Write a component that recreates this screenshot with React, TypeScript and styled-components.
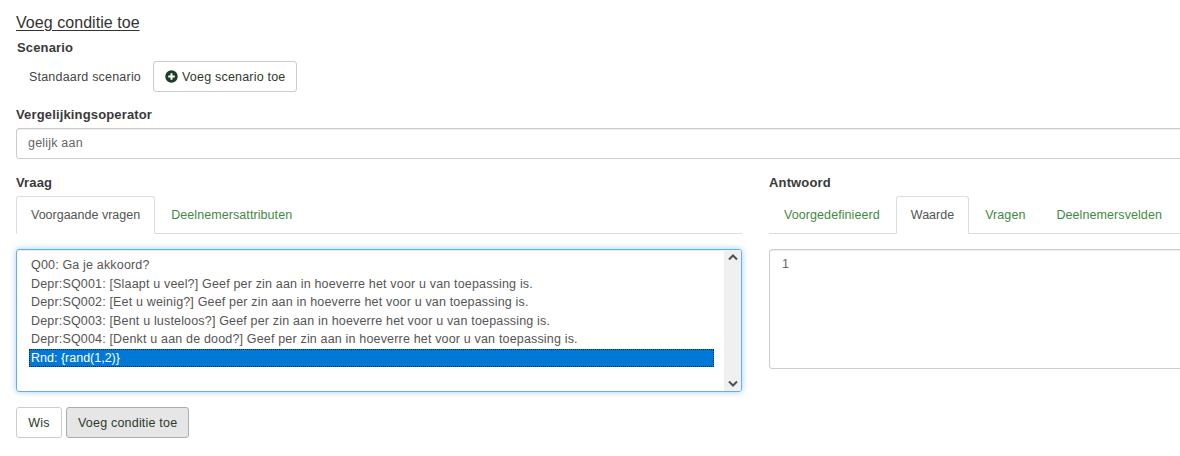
import styled, { createGlobalStyle } from "styled-components";

const GlobalStyle = createGlobalStyle`
  html, body {
    margin: 0;
    width: 1180px;
    height: 456px;
    overflow: hidden;
    background: #fff;
  }
  body {
    font-family: "Liberation Sans", Arial, sans-serif;
    font-size: 12.5px;
    letter-spacing: 0.2px;
    color: #555;
  }
`;

const Page = styled.div`
  width: 1200px;
  padding: 14px 0 0 16px;
  box-sizing: border-box;
`;

const Title = styled.h4`
  margin: 0;
  width: max-content;
  font-size: 16px;
  font-weight: 400;
  letter-spacing: 0.05px;
  line-height: 18px;
  color: #333;
  text-decoration: underline;
  text-underline-offset: 2px;
`;

const Label = styled.label`
  display: block;
  font-size: 13px;
  font-weight: 700;
  letter-spacing: 0.15px;
  line-height: 16px;
  color: #3a3a3a;
`;

const ScenarioLabel = styled(Label)`
  margin: 8px 0 0 1px;
`;

const ScenarioRow = styled.div`
  display: flex;
  align-items: center;
  gap: 12px;
  margin: 5px 0 0 13px;
`;

const ScenarioName = styled.span`
  color: #444;
`;

const Button = styled.button<{ $active?: boolean; $icon?: boolean }>`
  display: inline-flex;
  align-items: center;
  justify-content: center;
  gap: 4px;
  height: 31px;
  padding: ${(props) => (props.$icon ? "0 10px 0 11px" : "0 11px")};
  box-sizing: border-box;
  font: inherit;
  letter-spacing: inherit;
  color: #2b3a2b;
  border: 1px solid ${(props) => (props.$active ? "#adadad" : "#ccc")};
  border-radius: 3px;
  background: ${(props) => (props.$active ? "#e6e6e6" : "#fff")};
`;

const ClearButton = styled(Button)`
  min-width: 46px;
`;

const OperatorLabel = styled(Label)`
  margin-top: 15px;
`;

const Input = styled.div<{ $tall?: boolean }>`
  box-sizing: border-box;
  height: ${(props) => (props.$tall ? "120px" : "31px")};
  margin-top: ${(props) => (props.$tall ? "15px" : "5px")};
  padding: ${(props) => (props.$tall ? "7px 12px" : "7px 11px")};
  line-height: 15px;
  color: #666;
  border: 1px solid #ccc;
  border-radius: 3px;
  box-shadow: inset 0 1px 1px rgba(0, 0, 0, 0.075);
`;

const Columns = styled.div`
  display: grid;
  grid-template-columns: 726px 1fr;
  column-gap: 27px;
  margin-top: 16px;
`;

const Column = styled.section``;

const Tabs = styled.div`
  display: flex;
  height: 38px;
  margin-top: 5px;
  box-sizing: border-box;
  border-bottom: 1px solid #ddd;
`;

const Tab = styled.div<{ $active?: boolean }>`
  height: 38px;
  margin-right: 1px;
  padding: 0 14px;
  box-sizing: border-box;
  line-height: 36px;
  letter-spacing: ${(props) => (props.$active ? "0" : "0.08px")};
  color: ${(props) => (props.$active ? "#555" : "#3f8a43")};
  background: ${(props) => (props.$active ? "#fff" : "transparent")};
  border: 1px solid ${(props) => (props.$active ? "#ddd" : "transparent")};
  border-bottom-color: ${(props) => (props.$active ? "#fff" : "transparent")};
  border-radius: 3px 3px 0 0;
`;

const ListBox = styled.div`
  display: flex;
  height: 143px;
  margin-top: 15px;
  box-sizing: border-box;
  border: 1px solid #66afe9;
  border-radius: 3px;
  box-shadow: inset 0 1px 1px rgba(0, 0, 0, 0.075), 0 0 6px rgba(102, 175, 233, 0.6);
  overflow: hidden;
`;

const Options = styled.ul`
  flex: 1;
  margin: 0;
  padding: 6px 10px 0 12px;
  list-style: none;
`;

const Option = styled.li<{ $selected?: boolean }>`
  height: ${(props) => (props.$selected ? "18px" : "18.6px")};
  padding-left: 2px;
  line-height: 18px;
  letter-spacing: ${(props) => (props.$selected ? "0" : "0.17px")};
  white-space: nowrap;
  box-sizing: border-box;
  color: ${(props) => (props.$selected ? "#fff" : "#555")};
  background: ${(props) => (props.$selected ? "#0078d7" : "transparent")};
  outline: ${(props) => (props.$selected ? "1px dotted #0a2a4a" : "none")};
  outline-offset: -1px;
`;

const Scrollbar = styled.div`
  display: flex;
  flex-direction: column;
  justify-content: space-between;
  align-items: center;
  width: 17px;
  padding: 4px 0;
  box-sizing: border-box;
  background: #f0f0f0;
`;

const Actions = styled.div`
  display: flex;
  gap: 4px;
  margin-top: 15px;
`;

const PlusIcon = () => (
  <svg width="13" height="13" viewBox="0 0 13 13" aria-hidden="true">
    <circle cx="6.5" cy="6.5" r="6.2" fill="#1c3d24" />
    <path d="M6.5 3.2v6.6M3.2 6.5h6.6" stroke="#fff" strokeWidth="2" />
  </svg>
);

const Chevron = ({ up }: { up?: boolean }) => (
  <svg width="10" height="7" viewBox="0 0 10 7" aria-hidden="true">
    <path
      d={up ? "M1 5.5 5 1.5l4 4" : "M1 1.5l4 4 4-4"}
      fill="none"
      stroke="#505050"
      strokeWidth="2"
    />
  </svg>
);

const questions = [
  "Q00: Ga je akkoord?",
  "Depr:SQ001: [Slaapt u veel?] Geef per zin aan in hoeverre het voor u van toepassing is.",
  "Depr:SQ002: [Eet u weinig?] Geef per zin aan in hoeverre het voor u van toepassing is.",
  "Depr:SQ003: [Bent u lusteloos?] Geef per zin aan in hoeverre het voor u van toepassing is.",
  "Depr:SQ004: [Denkt u aan de dood?] Geef per zin aan in hoeverre het voor u van toepassing is.",
];

export default function App() {
  return (
    <Page>
      <GlobalStyle />
      <Title>Voeg conditie toe</Title>
      <ScenarioLabel>Scenario</ScenarioLabel>
      <ScenarioRow>
        <ScenarioName>Standaard scenario</ScenarioName>
        <Button $icon>
          <PlusIcon />
          Voeg scenario toe
        </Button>
      </ScenarioRow>
      <OperatorLabel>Vergelijkingsoperator</OperatorLabel>
      <Input>gelijk aan</Input>
      <Columns>
        <Column>
          <Label>Vraag</Label>
          <Tabs>
            <Tab $active>Voorgaande vragen</Tab>
            <Tab>Deelnemersattributen</Tab>
          </Tabs>
          <ListBox>
            <Options>
              {questions.map((question) => (
                <Option key={question}>{question}</Option>
              ))}
              <Option $selected>Rnd: {"{rand(1,2)}"}</Option>
            </Options>
            <Scrollbar>
              <Chevron up />
              <Chevron />
            </Scrollbar>
          </ListBox>
          <Actions>
            <ClearButton>Wis</ClearButton>
            <Button $active>Voeg conditie toe</Button>
          </Actions>
        </Column>
        <Column>
          <Label>Antwoord</Label>
          <Tabs>
            <Tab>Voorgedefinieerd</Tab>
            <Tab $active>Waarde</Tab>
            <Tab>Vragen</Tab>
            <Tab>Deelnemersvelden</Tab>
          </Tabs>
          <Input $tall>1</Input>
        </Column>
      </Columns>
    </Page>
  );
}
